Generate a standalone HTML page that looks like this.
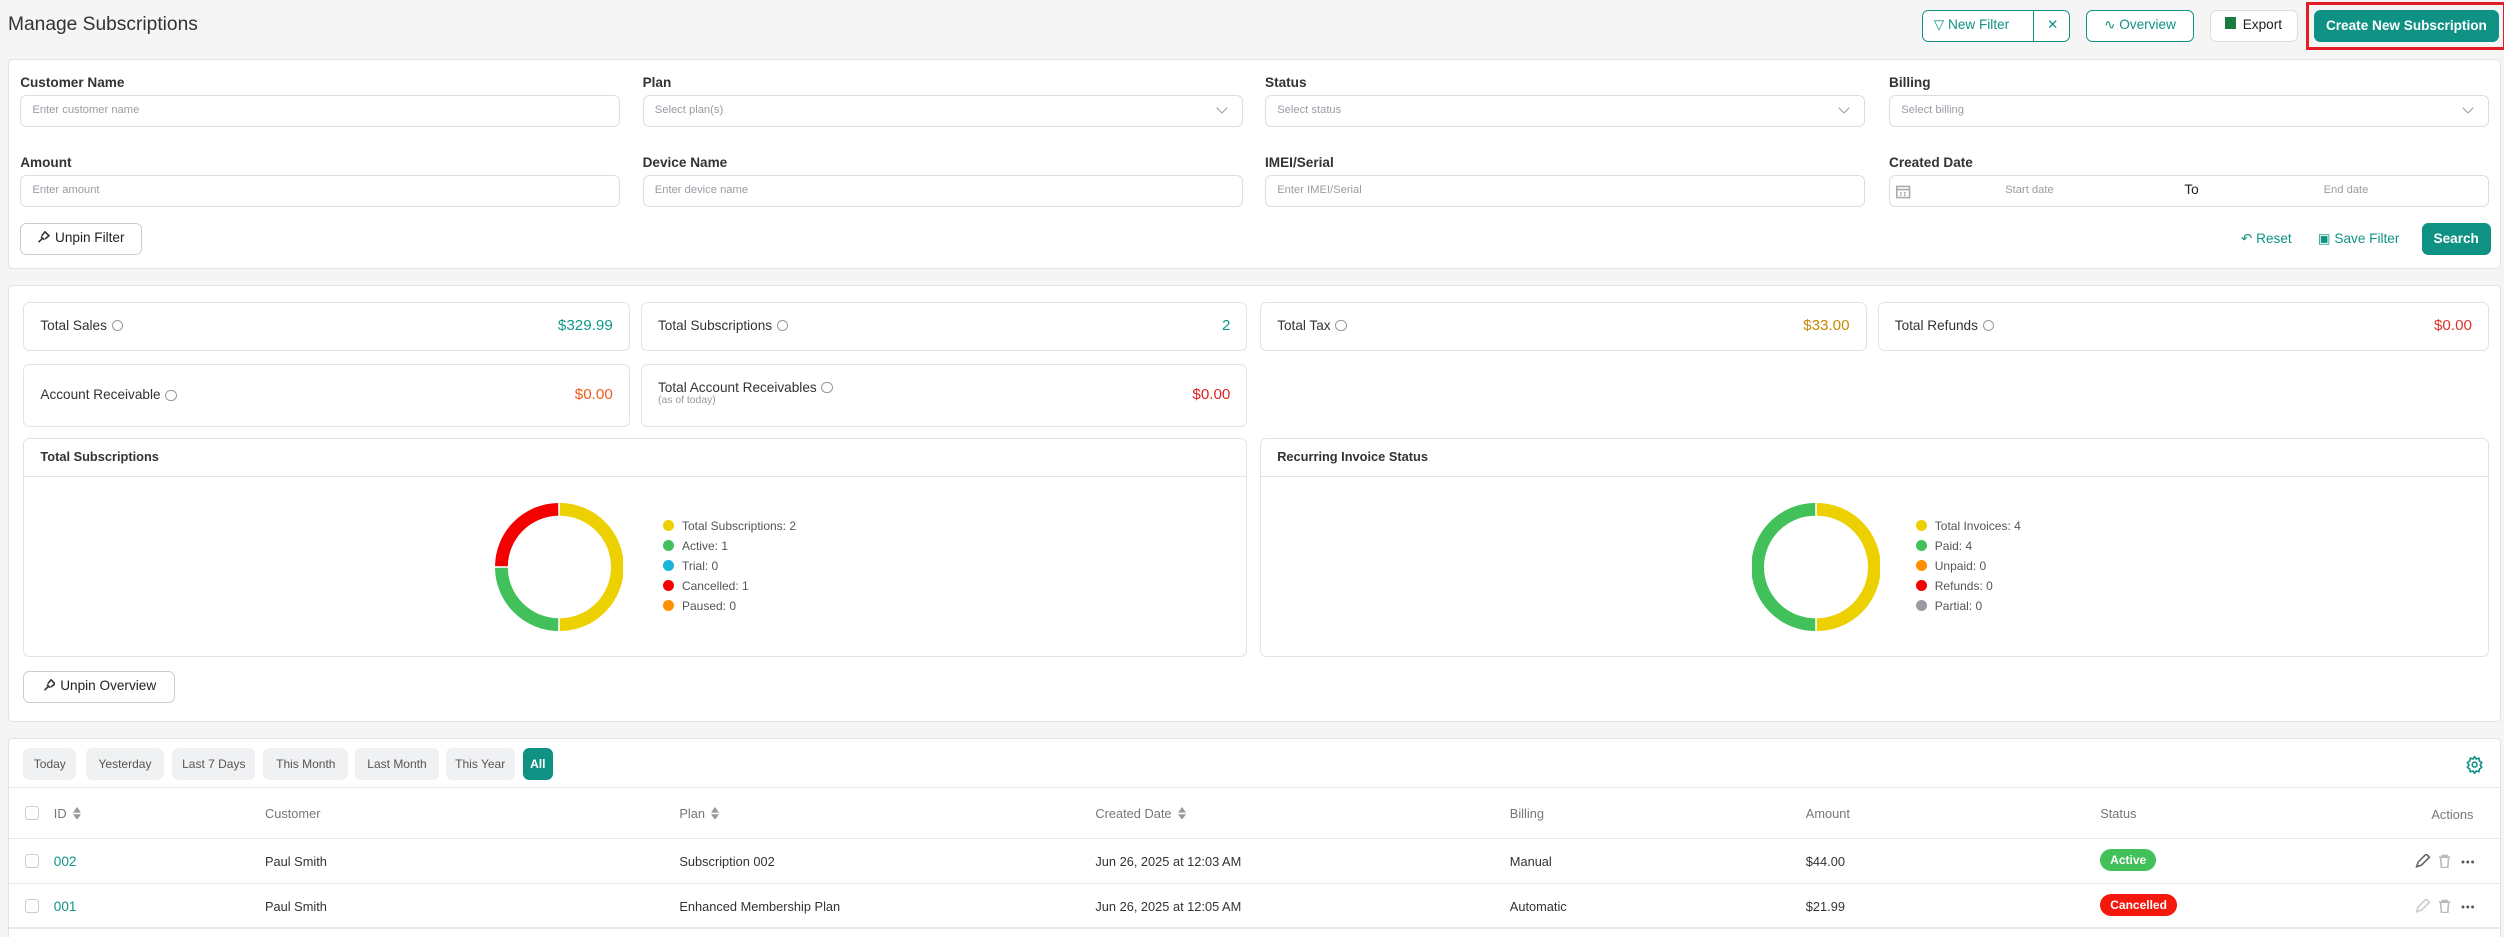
<!DOCTYPE html>
<html><head><meta charset="utf-8"><style>
*{box-sizing:border-box;margin:0;padding:0}
html,body{width:2504px;height:937px;overflow:hidden;background:#f5f5f6}
#r{zoom:1.6;width:1565px;height:586px;position:relative;font-family:"Liberation Sans",sans-serif;color:#222}
.a{position:absolute}
.panel{position:absolute;background:#fff;border:1px solid #e2e3e8;border-radius:3px}
.lbl{position:absolute;font-size:8.5px;font-weight:bold;color:#333}
.inp{position:absolute;height:20px;border:1px solid #dcdde2;border-radius:4px;background:#fff;font-size:7px;color:#9a9ca3;padding-left:7px;line-height:18px}
.chev{position:absolute;right:10px;top:5px;width:5px;height:5px;border-right:1px solid #999;border-bottom:1px solid #999;transform:rotate(45deg)}
.btn{position:absolute;height:20px;border:1px solid #0f9284;border-radius:4px;font-size:8.5px;color:#0f9284;line-height:18px;text-align:center;background:#fff}
.card{position:absolute;border:1px solid #e2e3e8;border-radius:4px;background:#fff;font-size:8.5px;color:#333}
.card .v{position:absolute;right:10px;font-size:9.5px}
.i{display:inline-block;width:7px;height:7px;border:1px solid #999;border-radius:50%;margin-left:3px;vertical-align:-1px}
.leg{position:absolute;font-size:7.5px;color:#555;line-height:12.5px}
.leg span{display:inline-block;width:7px;height:7px;border-radius:50%;margin-right:5px;vertical-align:-1px}
.tab{position:absolute;top:6px;height:20px;background:#f0f1f3;border-radius:4px;font-size:7.5px;color:#555;line-height:20px;text-align:center}
.th{position:absolute;font-size:8px;color:#777}
.td{position:absolute;font-size:8px;color:#333}
.cb{position:absolute;width:9px;height:9px;border:1px solid #ccc;border-radius:2px}
.hl{position:absolute;left:0;right:0;height:1px;background:#e6e7ec}
.sort{display:inline-block;margin-left:4px;vertical-align:-1px}
</style></head><body><div id="r">
<div class="a" style="left:5px;top:9px;font-size:12px;color:#333">Manage Subscriptions</div>
<div class="btn" style="left:1201px;top:6px;width:93px;text-align:left;padding-left:7px">&#9661; New Filter<span style="position:absolute;left:69px;top:0;bottom:0;border-left:1px solid #0f9284;width:24px;text-align:center">✕</span></div>
<div class="btn" style="left:1304px;top:6px;width:67px">&#8767; Overview</div>
<div class="btn" style="left:1381px;top:6px;width:55px;border-color:#ddd;color:#222"><span style="display:inline-block;width:7px;height:7px;background:#1d7a3f;margin-right:4px"></span>Export</div>
<div class="a" style="left:1441px;top:1px;width:125px;height:30px;border:2px solid #e41e26"></div>
<div class="a" style="left:1446px;top:6px;width:116px;height:20px;background:#0f9284;border-radius:4px;color:#fff;font-size:8.5px;font-weight:bold;line-height:20px;text-align:center">Create New Subscription</div>

<div class="panel" style="left:5px;top:37px;width:1558px;height:131px">
<div class="lbl" style="left:7px;top:9px">Customer Name</div><div class="inp" style="left:7px;top:22px;width:375px">Enter customer name</div>
<div class="lbl" style="left:396px;top:9px">Plan</div><div class="inp" style="left:396px;top:22px;width:375px">Select plan(s)<i class="chev"></i></div>
<div class="lbl" style="left:785px;top:9px">Status</div><div class="inp" style="left:785px;top:22px;width:375px">Select status<i class="chev"></i></div>
<div class="lbl" style="left:1175px;top:9px">Billing</div><div class="inp" style="left:1175px;top:22px;width:375px">Select billing<i class="chev"></i></div>
<div class="lbl" style="left:7px;top:59px">Amount</div><div class="inp" style="left:7px;top:72px;width:375px">Enter amount</div>
<div class="lbl" style="left:396px;top:59px">Device Name</div><div class="inp" style="left:396px;top:72px;width:375px">Enter device name</div>
<div class="lbl" style="left:785px;top:59px">IMEI/Serial</div><div class="inp" style="left:785px;top:72px;width:375px">Enter IMEI/Serial</div>
<div class="lbl" style="left:1175px;top:59px">Created Date</div><div class="inp" style="left:1175px;top:72px;width:375px"><svg style="position:absolute;left:4px;top:5px" width="9" height="9" viewBox="0 0 9 9"><rect x=".5" y="1.5" width="8" height="7" fill="none" stroke="#aaa"/><path d="M.5 3.5h8M2.5 5.5h1M5 5.5h1M2.5 7h1M5 7h1" stroke="#aaa"/></svg><span style="position:absolute;left:72px">Start date</span><span style="position:absolute;left:184px;color:#222;font-size:8.5px">To</span><span style="position:absolute;left:271px">End date</span></div>
<div class="btn" style="left:7px;top:102px;width:76px;border-color:#ccc;color:#222"><svg width="8" height="8" viewBox="0 0 8 8" style="vertical-align:-1px;margin-right:3px"><path d="M1 7l2.5-2.5M2.5 3.5l2 2M3 3l2-2.5 2.5 2.5L5 5" fill="none" stroke="#333"/></svg>Unpin Filter</div>
<div class="a" style="left:1395px;top:107px;font-size:8.5px;color:#0f9284">&#8630; Reset</div>
<div class="a" style="left:1443px;top:107px;font-size:8.5px;color:#0f9284">&#9635; Save Filter</div>
<div class="a" style="left:1508px;top:102px;width:43px;height:20px;background:#0f9284;border-radius:4px;color:#fff;font-size:8.5px;font-weight:bold;line-height:20px;text-align:center">Search</div>
</div>

<div class="panel" style="left:5px;top:178px;width:1558px;height:273px">
<div class="card" style="left:9px;top:10px;width:379px;height:31px;line-height:29px;padding-left:10px">Total Sales<i class="i"></i><span class="v" style="color:#12998a">$329.99</span></div>
<div class="card" style="left:395px;top:10px;width:379px;height:31px;line-height:29px;padding-left:10px">Total Subscriptions<i class="i"></i><span class="v" style="color:#12998a">2</span></div>
<div class="card" style="left:782px;top:10px;width:379px;height:31px;line-height:29px;padding-left:10px">Total Tax<i class="i"></i><span class="v" style="color:#c58a00">$33.00</span></div>
<div class="card" style="left:1168px;top:10px;width:382px;height:31px;line-height:29px;padding-left:10px">Total Refunds<i class="i"></i><span class="v" style="color:#d9302c">$0.00</span></div>
<div class="card" style="left:9px;top:49px;width:379px;height:39px;line-height:37px;padding-left:10px">Account Receivable<i class="i"></i><span class="v" style="color:#f05a1a">$0.00</span></div>
<div class="card" style="left:395px;top:49px;width:379px;height:39px;padding-left:10px"><div style="margin-top:9px">Total Account Receivables<i class="i"></i></div><div style="font-size:6.5px;color:#999">(as of today)</div><span class="v" style="color:#e02020;top:13px">$0.00</span></div>
<div class="card" style="left:9px;top:95px;width:765px;height:137px"><div style="height:24px;border-bottom:1px solid #e2e3e8;line-height:23px;padding-left:10px;font-weight:bold;font-size:8px">Total Subscriptions</div>
<svg class="a" style="left:294px;top:40px" width="80" height="80" viewBox="0 0 80 80"><g fill="none" stroke-width="8"><path d="M40.5 4 A36 36 0 0 1 40.5 76" stroke="#ecd000"/><path d="M39.5 76 A36 36 0 0 1 4 40.5" stroke="#42c15b"/><path d="M4 39.5 A36 36 0 0 1 39.5 4" stroke="#f50000"/></g></svg>
<div class="leg" style="left:399px;top:48px"><div><span style="background:#ecd000"></span>Total Subscriptions: 2</div><div><span style="background:#42c15b"></span>Active: 1</div><div><span style="background:#17b5d6"></span>Trial: 0</div><div><span style="background:#f50000"></span>Cancelled: 1</div><div><span style="background:#ff9000"></span>Paused: 0</div></div></div>
<div class="card" style="left:782px;top:95px;width:768px;height:137px"><div style="height:24px;border-bottom:1px solid #e2e3e8;line-height:23px;padding-left:10px;font-weight:bold;font-size:8px">Recurring Invoice Status</div>
<svg class="a" style="left:307px;top:40px" width="80" height="80" viewBox="0 0 80 80"><g fill="none" stroke-width="8"><path d="M40.5 4 A36 36 0 0 1 40.5 76" stroke="#ecd000"/><path d="M39.5 76 A36 36 0 0 1 39.5 4" stroke="#42c15b"/></g></svg>
<div class="leg" style="left:409px;top:48px"><div><span style="background:#ecd000"></span>Total Invoices: 4</div><div><span style="background:#42c15b"></span>Paid: 4</div><div><span style="background:#ff9000"></span>Unpaid: 0</div><div><span style="background:#f50000"></span>Refunds: 0</div><div><span style="background:#999ba3"></span>Partial: 0</div></div></div>
<div class="btn" style="left:9px;top:241px;width:95px;border-color:#ccc;color:#222"><svg width="8" height="8" viewBox="0 0 8 8" style="vertical-align:-1px;margin-right:3px"><path d="M1 7l2.5-2.5M2.5 3.5l2 2M3 3l2-2.5 2.5 2.5L5 5" fill="none" stroke="#333"/></svg>Unpin Overview</div>
</div>

<div class="panel" style="left:5px;top:461px;width:1558px;height:130px">
<div class="tab" style="left:9px;width:33px">Today</div>
<div class="tab" style="left:48px;width:49px">Yesterday</div>
<div class="tab" style="left:102px;width:52px">Last 7 Days</div>
<div class="tab" style="left:159px;width:53px">This Month</div>
<div class="tab" style="left:216px;width:53px">Last Month</div>
<div class="tab" style="left:273px;width:43px">This Year</div>
<div class="tab" style="left:321px;width:19px;background:#0f9284;color:#fff;font-weight:bold">All</div>
<svg class="a" style="left:1535px;top:10px" width="12" height="12" viewBox="0 0 24 24"><circle cx="12" cy="12" r="3" fill="none" stroke="#0f9284" stroke-width="2"/><path d="M12 2l2 3 3.5-1 .5 3.5 3 2-2 3 2 3-3 2-.5 3.5-3.5-1-2 3-2-3-3.5 1-.5-3.5-3-2 2-3-2-3 3-2 .5-3.5 3.5 1z" fill="none" stroke="#0f9284" stroke-width="2" stroke-linejoin="round"/></svg>
<div class="hl" style="top:30px"></div>
<div class="cb" style="left:10px;top:42px"></div>
<div class="th" style="left:28px;top:42px">ID<svg class="sort" width="5" height="8"><path d="M0 3.5L2.5 0 5 3.5zM0 4.5L2.5 8 5 4.5z" fill="#999"/></svg></div>
<div class="th" style="left:160px;top:42px">Customer</div>
<div class="th" style="left:419px;top:42px">Plan<svg class="sort" width="5" height="8"><path d="M0 3.5L2.5 0 5 3.5zM0 4.5L2.5 8 5 4.5z" fill="#999"/></svg></div>
<div class="th" style="left:679px;top:42px">Created Date<svg class="sort" width="5" height="8"><path d="M0 3.5L2.5 0 5 3.5zM0 4.5L2.5 8 5 4.5z" fill="#999"/></svg></div>
<div class="th" style="left:938px;top:42px">Billing</div>
<div class="th" style="left:1123px;top:42px">Amount</div>
<div class="th" style="left:1307px;top:42px">Status</div>
<div class="th" style="left:1514px;top:43px">Actions</div>
<div class="hl" style="top:62px"></div>
<div class="cb" style="left:10px;top:72px"></div>
<div class="td" style="left:28px;top:72px;color:#0f9284;font-size:8.5px">002</div>
<div class="td" style="left:160px;top:72px">Paul Smith</div>
<div class="td" style="left:419px;top:72px">Subscription 002</div>
<div class="td" style="left:679px;top:72px">Jun 26, 2025 at 12:03 AM</div>
<div class="td" style="left:938px;top:72px">Manual</div>
<div class="td" style="left:1123px;top:72px">$44.00</div>
<div class="a" style="left:1307px;top:69px;width:35px;height:14px;background:#42c15b;border-radius:7px;color:#fff;font-size:7.5px;font-weight:bold;text-align:center;line-height:14px">Active</div>
<svg class="a" style="left:1504px;top:72px" width="40" height="9" viewBox="0 0 40 9"><path d="M1 8l1-3 5-5 2 2-5 5z" fill="none" stroke="#666"/><path d="M15 2h7M17 2v-1h3v1M16 2l.5 6.5h4L21 2" fill="none" stroke="#bbb"/><circle cx="30" cy="5" r=".9" fill="#555"/><circle cx="33" cy="5" r=".9" fill="#555"/><circle cx="36" cy="5" r=".9" fill="#555"/></svg>
<div class="hl" style="top:90px"></div>
<div class="cb" style="left:10px;top:100px"></div>
<div class="td" style="left:28px;top:100px;color:#0f9284;font-size:8.5px">001</div>
<div class="td" style="left:160px;top:100px">Paul Smith</div>
<div class="td" style="left:419px;top:100px">Enhanced Membership Plan</div>
<div class="td" style="left:679px;top:100px">Jun 26, 2025 at 12:05 AM</div>
<div class="td" style="left:938px;top:100px">Automatic</div>
<div class="td" style="left:1123px;top:100px">$21.99</div>
<div class="a" style="left:1307px;top:97px;width:48px;height:14px;background:#f5180c;border-radius:7px;color:#fff;font-size:7.5px;font-weight:bold;text-align:center;line-height:14px">Cancelled</div>
<svg class="a" style="left:1504px;top:100px" width="40" height="9" viewBox="0 0 40 9"><path d="M1 8l1-3 5-5 2 2-5 5z" fill="none" stroke="#ccc"/><path d="M15 2h7M17 2v-1h3v1M16 2l.5 6.5h4L21 2" fill="none" stroke="#bbb"/><circle cx="30" cy="5" r=".9" fill="#555"/><circle cx="33" cy="5" r=".9" fill="#555"/><circle cx="36" cy="5" r=".9" fill="#555"/></svg>
<div class="hl" style="top:118px"></div>
</div>
</div></body></html>
